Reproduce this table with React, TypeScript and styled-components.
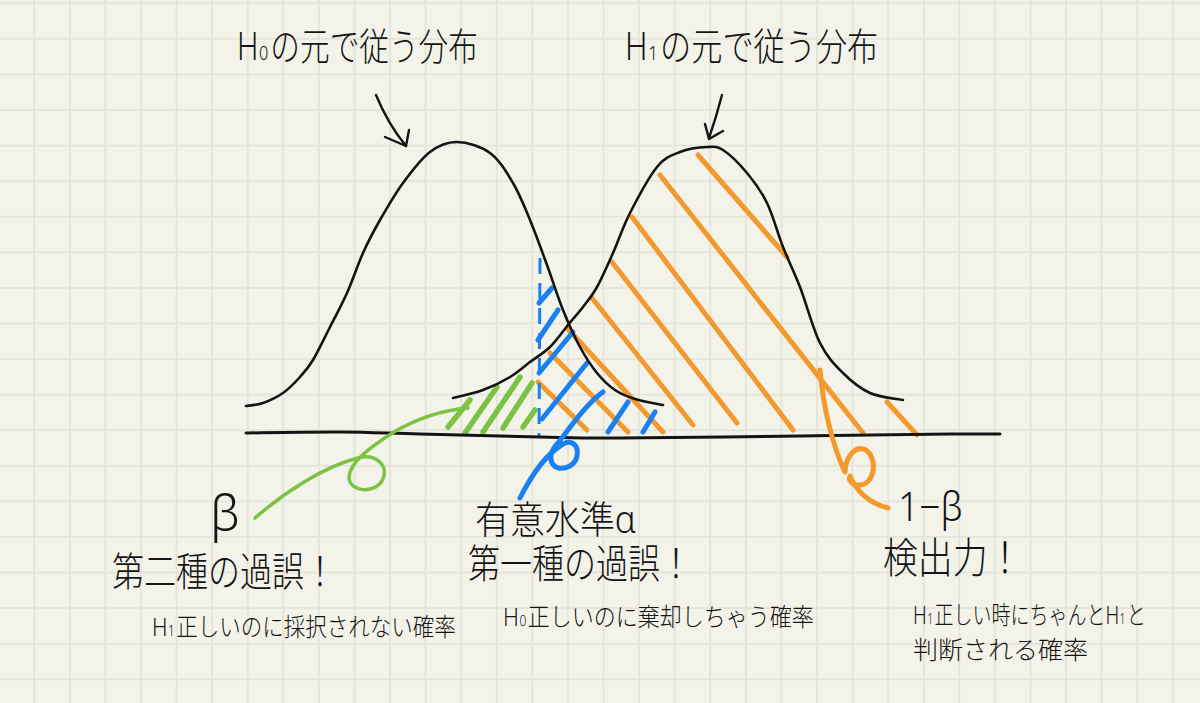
import React from "react";
import styled, { createGlobalStyle } from "styled-components";

type Pt = [number, number];

const GlobalStyle = createGlobalStyle`
  html, body {
    margin: 0;
    padding: 0;
    background: #f4f3ea;
    overflow: hidden;
  }
`;

const Board = styled.div`
  position: relative;
  width: 1200px;
  height: 703px;
  display: grid;
  grid-template-columns: 1fr;
  grid-template-rows: 1fr;
  background-color: #f4f3ea;
  background-image: linear-gradient(to right, #e6e5db 1.5px, transparent 1.5px),
    linear-gradient(to bottom, #e6e5db 1.5px, transparent 1.5px);
  background-size: 35.58px 35.58px;
  background-position: 33.3px 2.3px;
  font-family: "Noto Sans", "Noto Sans CJK JP", sans-serif;
  color: #151515;
  overflow: hidden;
`;

const Drawing = styled.svg`
  grid-area: 1 / 1;
  width: 1200px;
  height: 703px;
  display: block;
`;

const Layer = styled.div`
  grid-area: 1 / 1;
  display: grid;
  grid-template-rows: 490px 1fr;
`;

const TitleRow = styled.div`
  display: grid;
  grid-template-columns: 388px auto;
  align-items: start;
  padding: 26px 0 0 237px;
`;

const CaptionRow = styled.div`
  display: grid;
  grid-template-columns: 356px 415px auto;
  align-items: start;
  padding-left: 112px;
`;

const Caption = styled.div`
  display: flex;
  flex-direction: column;
  align-items: flex-start;
`;

const Hand = styled.span<{ $size: number; $sx: number; $indent?: number; $gap?: number }>`
  display: block;
  white-space: nowrap;
  font-size: ${(p) => p.$size}px;
  line-height: 1;
  font-weight: 300;
  height: ${(p) => p.$size}px;
  margin-left: ${(p) => p.$indent ?? 0}px;
  margin-top: ${(p) => p.$gap ?? 0}px;
  transform: scaleX(${(p) => p.$sx});
  transform-origin: left top;
`;

const Sub = styled.span`
  font-size: 0.55em;
  margin: 0 0.12em 0 0.04em;
`;

// catmull-rom through the traced points
function smooth(pts: Pt[]): string {
  let d = `M${pts[0][0]},${pts[0][1]}`;
  for (let i = 0; i < pts.length - 1; i++) {
    const p0 = pts[i - 1] || pts[i];
    const p1 = pts[i];
    const p2 = pts[i + 1];
    const p3 = pts[i + 2] || p2;
    const c1x = p1[0] + (p2[0] - p0[0]) / 6;
    const c1y = p1[1] + (p2[1] - p0[1]) / 6;
    const c2x = p2[0] - (p3[0] - p1[0]) / 6;
    const c2y = p2[1] - (p3[1] - p1[1]) / 6;
    d += ` C${c1x.toFixed(1)},${c1y.toFixed(1)} ${c2x.toFixed(1)},${c2y.toFixed(1)} ${p2[0]},${p2[1]}`;
  }
  return d;
}

const leftCurve: Pt[] = [
  [246, 406], [263, 403], [283, 393], [300, 377], [313, 360], [330, 327],
  [347, 293], [363, 253], [380, 220], [403, 183], [430, 152], [457, 142],
  [490, 153], [513, 183], [530, 220], [547, 265], [563, 310], [580, 347],
  [597, 373], [615, 390], [635, 399], [663, 405],
];

const rightCurve: Pt[] = [
  [453, 398], [483, 390], [510, 377], [530, 362], [550, 347], [568, 325],
  [583, 307], [597, 287], [613, 253], [630, 213], [657, 167], [680, 152],
  [707, 147], [723, 150], [747, 173], [767, 203], [783, 247], [800, 287],
  [820, 343], [843, 373], [870, 393], [903, 400],
];

const baseline: Pt[] = [
  [246, 433], [340, 432], [420, 434], [540, 437], [620, 438], [800, 436],
  [950, 434], [1000, 434],
];

const orange: number[][] = [
  [538, 382, 587, 430],
  [550, 353, 628, 432],
  [567, 328, 663, 432],
  [592, 298, 693, 425],
  [612, 262, 737, 423],
  [632, 217, 793, 430],
  [660, 175, 863, 433],
  [698, 155, 787, 257],
  [887, 402, 917, 435],
];

const green: number[][] = [
  [448, 427, 470, 400],
  [465, 433, 497, 387],
  [483, 432, 520, 377],
  [503, 428, 532, 383],
  [523, 427, 535, 410],
];

const blue: number[][] = [
  [539, 303, 552, 288],
  [538, 340, 558, 310],
  [539, 373, 573, 332],
  [542, 419, 587, 363],
  [608, 432, 628, 402],
  [643, 432, 655, 412],
];

const ORANGE = "#f29a2e";
const BLUE = "#1a80f0";
const GREEN = "#7cc243";
const INK = "#141414";

export default function App() {
  return (
    <>
      <GlobalStyle />
      <Board>
        <Drawing viewBox="0 0 1200 703">
          <g fill="none" strokeLinecap="round" strokeLinejoin="round">
            {green.map(([a, b, c, d], i) => (
              <line key={`g${i}`} x1={a} y1={b} x2={c} y2={d} stroke={GREEN} strokeWidth={5.5} />
            ))}
            {orange.map(([a, b, c, d], i) => (
              <line key={`o${i}`} x1={a} y1={b} x2={c} y2={d} stroke={ORANGE} strokeWidth={5} />
            ))}
            {blue.map(([a, b, c, d], i) => (
              <line key={`b${i}`} x1={a} y1={b} x2={c} y2={d} stroke={BLUE} strokeWidth={5} />
            ))}
            <line x1={540} y1={258} x2={539} y2={437} stroke={BLUE} strokeWidth={3} strokeDasharray="16 9" strokeLinecap="butt" />

            <path d={smooth(leftCurve)} stroke={INK} strokeWidth={2.6} />
            <path d={smooth(rightCurve)} stroke={INK} strokeWidth={2.6} />
            <path d={smooth(baseline)} stroke={INK} strokeWidth={3} />

            <path d="M376,95 Q388,124 406,146" stroke={INK} strokeWidth={2.4} />
            <path d="M385,137 L406,146 L409,130" stroke={INK} strokeWidth={2.4} />
            <path d="M722,95 Q716,118 709,138" stroke={INK} strokeWidth={2.4} />
            <path d="M705,124 L709,139 L723,131" stroke={INK} strokeWidth={2.4} />

            <path
              d="M255,518 C285,492 325,466 358,458 C376,453 390,466 382,481 C374,494 350,492 349,478 C349,462 372,446 394,432 C418,418 444,410 468,408"
              stroke={GREEN}
              strokeWidth={3.5}
            />
            <path
              d="M520,498 C530,478 545,455 563,444 C578,436 583,458 570,466 C555,474 543,460 557,444 C570,428 586,404 603,392"
              stroke={BLUE}
              strokeWidth={5}
            />
            <path
              d="M820,370 C823,405 832,445 845,472 C846,455 856,445 866,450 C878,458 875,484 860,485 C852,486 848,480 850,476 C858,494 872,504 888,508"
              stroke={ORANGE}
              strokeWidth={5}
            />
          </g>
        </Drawing>

        <Layer>
          <TitleRow>
            <Hand $size={38} $sx={0.78}>
              H<Sub>0</Sub>の元で従う分布
            </Hand>
            <Hand $size={38} $sx={0.82}>
              H<Sub>1</Sub>の元で従う分布
            </Hand>
          </TitleRow>

          <CaptionRow>
            <Caption>
              <Hand $size={50} $sx={1} $indent={98} $gap={-3}>
                β
              </Hand>
              <Hand $size={40} $sx={0.8} $gap={14}>
                第二種の過誤！
              </Hand>
              <Hand $size={25} $sx={0.86} $indent={40} $gap={23}>
                H<Sub>1</Sub>正しいのに採択されない確率
              </Hand>
            </Caption>

            <Caption>
              <Hand $size={38} $sx={0.92} $indent={7} $gap={9}>
                有意水準α
              </Hand>
              <Hand $size={40} $sx={0.8} $gap={6}>
                第一種の過誤！
              </Hand>
              <Hand $size={25} $sx={0.88} $indent={35} $gap={21}>
                H<Sub>0</Sub>正しいのに棄却しちゃう確率
              </Hand>
            </Caption>

            <Caption>
              <Hand $size={40} $sx={0.93} $indent={15} $gap={-4}>
                1−β
              </Hand>
              <Hand $size={42} $sx={0.83} $gap={10}>
                検出力！
              </Hand>
              <Hand $size={25} $sx={0.76} $indent={30} $gap={24}>
                H<Sub>1</Sub>正しい時にちゃんとH<Sub>1</Sub>と
              </Hand>
              <Hand $size={25} $sx={1} $indent={30} $gap={10}>
                判断される確率
              </Hand>
            </Caption>
          </CaptionRow>
        </Layer>
      </Board>
    </>
  );
}
